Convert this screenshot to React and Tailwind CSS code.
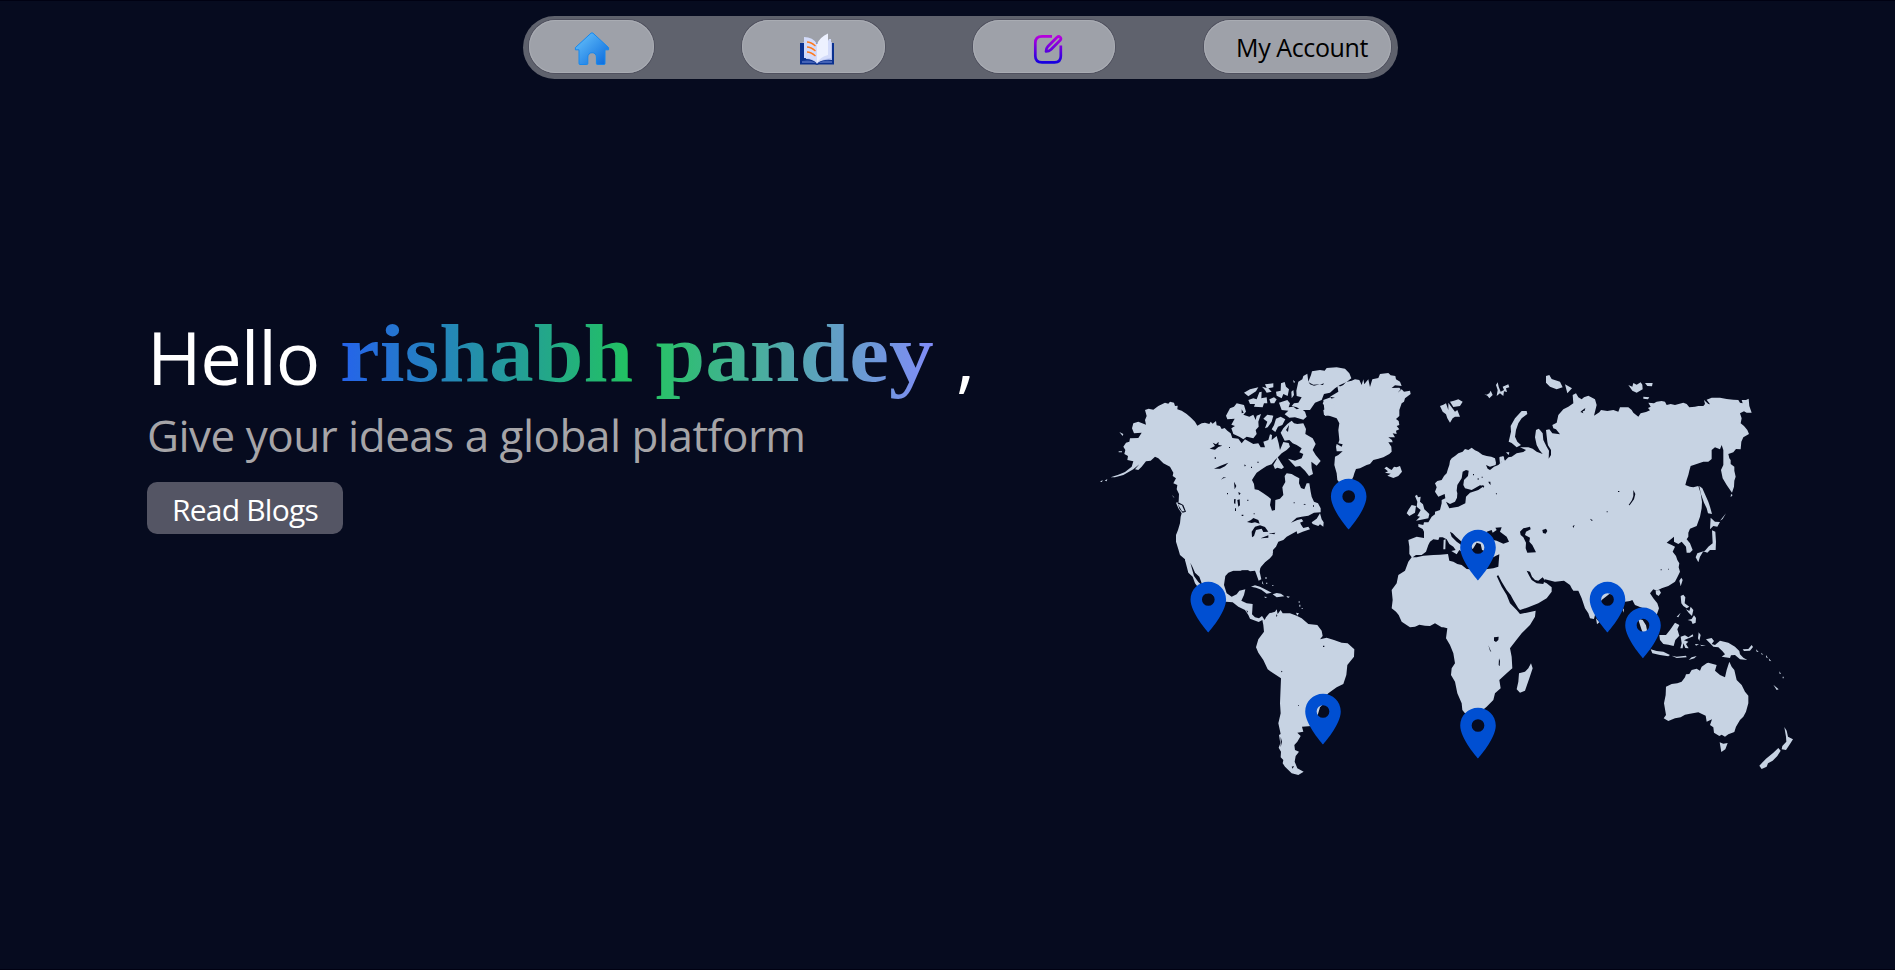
const LAND = "#c7d3e3";
const SEA = "#060b1f";

function Pin({ x, y }) {
  return (
    <path
      transform={`translate(${x} ${y + 0.5}) scale(2.54) translate(-12 -22)`}
      fill="#004fd2"
      fillRule="evenodd"
      d="M12 2C8.13 2 5 5.13 5 9c0 5.25 7 13 7 13s7-7.75 7-13c0-3.87-3.13-7-7-7zm0 9.5a2.5 2.5 0 0 1 0-5 2.5 2.5 0 0 1 0 5z"
    />
  );
}

/* Each region is drafted on its own local grid, three units to the pixel. */
function Region({ x, y, children }) {
  return <g transform={`translate(${x} ${y}) scale(0.33333)`}>{children}</g>;
}

function WorldMap() {
  return (
    <svg className="block h-[430px] w-[720px]" viewBox="1090 355 720 430" fill={LAND} strokeLinejoin="round">
      {/* Eurasia and Africa */}
      <Region x={1320} y={350}>
        <path d="M345 400L352 393 365 390 372 378 380 370 384 356 388 345 390 332 395 325 405 318 415 310 428 305 435 297 445 300 455 293 465 301 475 305 487 314 500 318 514 320 525 325 528 338 527 345 510 350 498 345 503 356 510 360 522 350 535 345 545 335 540 320 550 322 555 332 565 322 575 320 590 310 610 306 618 300 600 292 625 292 638 296 650 305 668 312 658 300 650 285 645 262 648 240 656 236 660 240 668 250 670 270 680 290 687 302 686 326 693 315 693 300 684 286 682 275 680 258 678 240 688 238 697 250 720 253 708 238 700 235 697 225 710 218 715 195 730 178 745 170 760 160 758 135 768 130 775 142 785 148 792 142 805 137 825 148 830 165 822 197 838 187 843 180 862 183 880 180 895 185 900 172 925 172 935 180 940 188 955 200 962 190 978 186 990 181 984 174 992 170 985 158 1002 160 1010 155 1025 153 1035 155 1040 165 1052 162 1065 165 1090 158 1100 162 1108 172 1125 170 1135 168 1150 168 1155 162 1152 150 1165 162 1170 163 1160 149 1175 143 1200 143 1220 147 1240 149 1255 150 1260 158 1268 160 1265 150 1278 150 1286 146 1288 168 1295 188 1280 188 1272 184 1260 190 1265 205 1262 220 1272 228 1282 240 1287 252 1270 262 1264 275 1262 298 1248 297 1240 307 1225 312 1228 325 1232 330 1232 342 1243 350 1243 362 1247 380 1243 392 1242 410 1236 428 1220 405 1208 385 1203 360 1210 345 1210 300 1205 285 1200 298 1185 292 1175 300 1175 327 1165 335 1150 335 1130 342 1112 348 1108 362 1105 375 1100 390 1096 405 1110 410 1120 412 1135 408 1142 430 1146 455 1145 475 1140 500 1130 528 1110 536 1105 548 1105 560 1100 568 1110 580 1118 600 1110 608 1100 608 1098 590 1085 575 1075 582 1062 575 1062 560 1050 570 1040 578 1055 585 1065 590 1058 605 1068 618 1072 630 1078 640 1076 652 1080 665 1072 682 1065 695 1045 708 1025 715 1010 722 1000 718 990 730 1000 745 1012 760 1017 775 1010 795 995 800 985 785 970 775 958 770 945 765 937 750 930 753 915 755 895 735 868 732 845 750 830 775 822 807 810 805 805 790 795 775 785 745 775 722 760 722 755 715 750 705 732 692 705 695 675 688 670 695 680 700 695 712 695 725 680 745 655 760 625 772 600 780 595 775 580 750 572 735 560 720 545 695 535 676 530 678 545 710 560 735 570 760 590 780 600 792 620 788 647 782 645 800 630 825 605 850 585 875 570 895 575 920 577 955 560 970 538 990 542 1015 525 1030 520 1050 500 1070 470 1095 450 1095 435 1090 427 1080 425 1060 412 1030 405 995 393 975 395 955 405 940 400 910 390 885 378 865 382 835 370 832 365 832 345 820 330 828 315 827 298 824 285 830 270 832 245 815 236 795 228 785 215 775 218 750 215 720 230 700 235 675 255 662 265 635 275 622 268 612 268 590 265 570 290 560 312 564 312 545 308 537 295 530 295 522 310 525 312 517 325 517 335 500 345 493 345 485 360 480 365 460 365 450 376 445 374 432 355 440 345 425 350 412Z" />
        <g fill={SEA}>
          <path d="M278 622L288 615 305 615 318 605 325 585 330 575 340 568 355 570 358 562 368 562 380 568 388 582 400 590 407 600 394 603 410 613 418 600 425 605 430 590 440 585 446 600 452 588 458 598 470 578 482 582 486 600 500 605 520 622 528 617 538 613 535 650 520 655 480 660 440 657 425 645 412 642 400 635 388 632 384 612 360 614 340 615 310 617 290 622Z" />
          <path d="M390 545L398 550 408 560 425 575 425 586 410 575 395 560Z" />
          <path d="M438 360L446 362 444 378 432 390 430 405 435 415 455 420 480 406 492 408 475 420 450 428 438 440 436 460 415 470 388 475 378 455 390 462 405 455 411 443 412 430 410 422 412 405 425 385 428 365Z" />
          <path d="M500 545L515 540 518 548 530 540 526 533 545 532 540 545 560 560 567 575 550 581 530 572 510 568Z" />
          <path d="M600 545L610 535 630 530 632 538 618 545 615 555 630 563 628 575 637 585 648 607 622 608 617 595 618 578 610 562 602 555Z" />
          <path d="M667 540L678 536 682 543 677 551 669 549ZM505 395L511 395 512 405 507 400ZM486 405L493 408 490 414ZM527 430L531 430 530 434ZM459 372H462V376H459ZM473 385H476V389H473ZM485 380H488V383H485ZM940 420L946 432 942 448 929 466 926 465 936 450 940 438ZM894 423H898V426H894ZM810 506L819 511 814 512ZM758 528L764 525 760 534ZM860 484H863V487H860ZM778 190L785 182 796 174 794 182 788 184 790 190 782 186Z" />
          <path d="M620 662L630 665 636 680 645 690 655 692 668 682 674 690 670 702 650 700 635 690 628 678ZM522 862L536 860 535 870 528 876 522 872ZM505 886L510 897 514 907 510 902ZM537 925L540 933 539 949 536 945Z" />
        </g>
        <path d="M371 570L377 568 376 598 370 598ZM633 940L638 955 628 985 615 1022 600 1028 590 1018 595 995 597 970 615 965 625 955ZM285 438L291 434 294 442 302 440 300 455 309 463 313 478 318 482 328 492 325 505 300 510 288 512 300 500 292 498 302 480 290 470 292 455ZM265 480L275 465 288 468 285 488 268 498 260 490Z" />
        {/* Greenland, Iceland and the polar islands */}
        <path d="M52 108L62 109 70 105 78 96 95 92 105 88 118 90 125 105 130 88 133 103 138 96 145 88 150 111 157 88 175 84 180 72 205 69 212 76 226 78 228 88 240 95 245 108 225 106 215 114 238 113 242 118 233 128 245 118 252 125 270 122 272 132 255 145 252 155 245 160 238 180 238 198 228 207 236 213 238 225 230 228 238 238 228 242 230 252 218 250 225 262 205 262 216 270 218 277 205 277 214 290 215 305 208 312 190 322 175 326 160 330 150 342 140 345 120 355 108 357 103 370 100 380 95 390 82 400 60 400 52 390 50 370 43 345 45 320 55 315 68 304 50 304 48 290 50 282 65 290 68 283 55 280 58 270 55 240 58 220 50 205 30 198 12 195 10 180 20 176 8 160 15 150 45 143 30 140 55 125Z" />
        <path d="M193 355L200 350 208 356 215 360 222 350 230 352 240 348 246 365 235 378 220 384 202 377 212 371 195 368 204 364ZM360 168L370 164 378 160 385 180 385 158 395 172 405 185 412 180 420 200 405 200 398 205 390 218 382 205 378 193 368 185ZM390 155L402 152 415 148 428 155 420 168 400 171ZM493 132L500 134 508 130 512 122 518 135 508 145 503 138ZM528 105L533 97 536 110 542 125 552 120 548 110 565 103 568 112 558 115 561 126 552 124 550 138 540 130 530 138 533 120ZM605 183L620 183 622 192 605 205 595 220 588 240 585 260 592 275 603 285 590 292 575 279 566 275 573 245 572 228 585 205ZM678 78L688 75 695 87 720 95 728 112 710 118 690 110 678 98ZM735 103L756 115 742 130ZM925 105L937 110 940 99 950 104 962 97 967 104 968 118 950 128 937 122ZM975 99L998 99 996 109 982 108ZM970 140L988 142 984 148 970 146ZM538 322L550 318 553 325 540 342ZM558 307L568 307 566 315Z" />
        {/* Japan and Sakhalin */}
        <path d="M1138 408L1147 415 1156 435 1165 455 1170 470 1176 492 1164 490 1160 475 1152 458 1142 430ZM1172 503L1185 515 1200 516 1192 530 1180 528 1170 538ZM1176 541L1186 545 1188 575 1187 600 1170 600 1162 608 1150 604 1140 620 1135 637 1127 622 1132 610 1155 602 1165 590 1178 580 1177 560ZM1200 512L1218 490 1208 507ZM1233 432L1238 435 1232 442Z" />
      </Region>

      {/* North America */}
      <Region x={1090} y={350}>
        <path d="M165 180L176 176 190 179 205 168 225 158 235 161 240 155 252 158 255 168 263 167 262 178 275 182 290 192 303 203 315 215 322 227 335 220 345 218 358 222 362 215 368 221 378 213 380 226 390 228 395 237 404 234 412 242 422 250 427 264 445 266 455 280 465 268 478 275 490 282 505 280 512 292 525 292 520 275 535 270 540 253 546 255 545 270 560 258 566 280 570 300 580 276 596 279 600 290 590 300 575 310 565 320 555 330 545 343 530 348 515 358 500 368 492 380 486 390 492 402 494 418 505 420 520 430 535 440 543 447 540 465 546 482 555 480 556 450 570 446 580 435 577 412 586 396 584 378 590 370 605 372 615 378 628 385 627 400 633 414 643 418 650 400 658 400 662 425 665 440 672 455 684 460 692 475 692 487 672 488 655 497 635 500 620 503 603 518 622 510 638 506 650 513 632 522 640 534 655 530 660 538 638 545 622 552 620 544 605 552 590 560 580 570 565 575 558 590 549 600 548 615 540 625 525 637 505 660 298 662 290 640 285 628 270 615 265 598 258 575 258 555 264 540 270 520 272 500 275 490 265 475 258 458 266 455 267 432 260 418 262 405 250 400 258 385 248 378 250 368 240 350 220 340 205 325 195 320 182 332 168 334 155 350 145 360 135 358 148 343 130 358 100 375 75 382 62 382 85 374 105 366 125 350 130 334 112 330 114 318 103 312 106 300 100 290 108 278 118 275 120 265 145 264 155 248 132 250 126 235 130 220 145 215 168 224 165 210 170 198Z" />
        <path d="M408 197L420 175 432 170 440 160 462 165 468 185 460 194 478 200 490 194 497 210 500 197 513 192 505 215 506 230 497 240 500 252 490 265 470 260 460 268 448 260 430 252 424 235 435 228 424 224 434 206 412 208ZM462 128L480 118 505 112 498 124 475 139ZM475 150L490 145 500 148 508 127 515 125 514 145 530 142 532 160 522 160 518 172 492 170 495 162 480 162ZM516 110L530 114 525 103 550 100 550 112 535 115 545 125 530 128 525 120ZM558 125L572 122 573 100 584 96 588 110 597 118 593 138 580 132 575 145 560 137ZM538 148L552 142 560 148 553 160 542 160ZM567 158L592 150 600 160 596 172 610 170 620 178 632 175 645 185 650 200 640 209 615 202 598 203 584 193 595 182 575 180ZM604 125L610 120 612 135 605 145ZM609 90L615 95 612 100ZM619 122L625 95 637 88 640 78 652 71 655 95 663 75 666 64 690 60 704 62 710 54 740 52 765 56 778 70 784 85 770 96 750 105 735 115 720 128 702 132 695 150 675 158 660 180 635 180 620 172 605 168 612 160 625 158 635 142 620 138ZM572 248L580 235 592 222 605 212 612 220 622 222 640 220 648 237 646 252 668 265 677 282 668 300 677 315 692 333 680 347 664 335 665 355 669 372 657 378 645 362 630 348 616 350 605 338 594 326 615 332 635 325 640 312 628 307 635 295 620 285 608 280 598 270 584 272ZM550 345L560 328 562 320 572 337 582 352 575 357 562 353 555 357ZM520 206L532 194 550 197 545 215 533 232 525 235 532 215ZM552 226L558 206 572 200 586 208 577 225 564 230 556 246 545 238ZM665 517L680 506 690 490 695 508 701 517 700 530 690 523 685 528 668 522ZM700 150L722 142 735 170 726 192 705 198ZM88 246L100 252 98 258ZM86 304H96V307H86ZM30 395L38 390 36 396ZM44 392L52 387 50 394ZM247 435L254 445 249 440Z" />
        <g fill={SEA}>
          <path d="M359 296L375 288 368 278 378 283 386 275 385 284 397 287 385 291 375 299ZM372 356L390 348 415 338 405 349 390 356ZM393 389L400 382 409 383 400 385ZM442 450L449 448 450 466 445 470ZM432 448L437 447 436 462 432 460ZM432 395L439 408 434 418ZM471 516L483 510 490 504 505 510 509 521 495 517 485 519ZM486 562L485 545 495 530 510 526 525 531 535 545 520 546 515 536 498 540 492 558ZM512 565L535 556 535 563ZM536 550L556 548 553 553ZM632 503L655 505 672 494 665 512 658 527 640 532 630 518 640 514ZM464 343L468 348 463 349ZM374 322H378V326H374ZM417 291H420V294H417ZM445 426L452 430 447 436ZM483 350H486V354H483ZM502 335H506V338H502ZM435 475H438V483H435ZM455 494H460V498H455ZM491 490H494V493H491ZM611 457H614V460H611ZM642 461L649 465 641 464ZM669 466H672V470H669ZM411 429H414V433H411ZM472 449H475V453H472ZM262 455L280 465 288 485 278 488 268 476Z" />
          <path d="M588 240L597 225 594 246ZM656 97L670 104 690 103 672 107 660 103ZM455 178L461 188 455 190ZM690 104L702 100 699 105Z" />
        </g>
        <path d="M263 461L276 466 284 484 276 484Z" />
      </Region>

      {/* Central and South America */}
      <Region x={1180} y={560}>
        <path d="M15 0L20 -25 280 -25 260 0 242 18 239 35 244 58 236 62 228 40 225 32 210 34 195 25 182 32 160 32 145 38 136 48 132 75 140 100 155 110 170 103 178 92 196 88 192 105 184 122 200 130 218 132 217 150 216 163 225 172 237 175 246 168 254 180 258 172 268 160 285 155 290 148 293 162 302 150 308 160 330 160 350 167 365 175 385 192 412 195 425 212 428 228 420 238 440 233 462 240 485 248 503 250 523 268 522 290 502 315 499 345 490 372 470 382 445 400 430 415 430 432 420 442 414 462 395 498 366 500 370 515 352 518 362 528 352 545 343 555 345 570 357 575 347 588 344 605 352 625 371 635 355 645 335 640 315 620 308 610 310 600 302 592 303 575 296 563 301 550 297 525 302 522 295 490 302 460 300 430 303 355 280 340 263 328 250 300 235 278 228 262 235 238 252 215 250 195 247 180 236 186 220 180 210 176 205 165 195 150 175 140 158 127 138 125 115 120 93 99 78 100 60 90 45 70 38 50 25 38Z" />
        <path d="M213 80L225 76 240 80 255 88 275 98 260 101 244 89 228 83ZM278 103L290 99 303 101 313 109 290 112ZM252 110L262 111 256 114ZM319 108L330 110 324 114ZM246 62L251 74 246 70ZM256 52H260V56H256ZM356 124H359V128H356ZM358 134H361V140H358ZM258 68H262V71H258ZM277 75H280V78H277ZM365 144H368V147H365ZM348 158L357 160 352 167Z" />
        <path fill={SEA} d="M31 8L38 22 45 38 58 50 68 78 55 66 42 48ZM288 163L292 166 290 172ZM429 257H433V261H429ZM303 332L308 335 304 337ZM355 435H357V438H355ZM302 530L306 545 302 562ZM200 150L204 155 201 158ZM335 620L342 618 338 626Z" />
      </Region>

      {/* South-east Asia and Oceania */}
      <Region x={1560} y={540}>
        <path d="M287 152L298 150 303 158 296 168 288 163ZM358 122L364 113 368 120 362 139ZM362 168L370 164 376 172 374 190 388 200 380 205 370 198 364 190ZM378 208L388 213 392 200 400 210 396 228 386 218ZM350 230L362 218 355 232ZM383 240L395 237 402 226 408 234 407 248 398 252 394 243ZM298 285L318 285 330 270 345 248 358 255 352 268 358 287 346 300 341 318 325 314 310 312 300 300ZM362 290L375 286 385 292 398 283 400 289 380 297 372 301 385 305 378 312 386 325 376 324 370 310 368 325 361 325 365 310ZM272 328L290 333 310 335 330 345 325 349 300 345 277 340ZM335 347L350 350 378 347 380 352 350 354ZM386 360L395 352 410 348 403 355ZM416 277L422 285 418 303 414 295ZM405 312L417 313 408 317ZM420 314L438 317 425 318ZM438 298L455 294 462 303 455 312 465 315 480 302 505 308 525 320 538 333 540 343 550 353 562 360 540 358 525 345 513 346 510 354 485 350 495 343 487 333 475 322 460 320 450 310ZM548 328L565 327 575 315 579 321 570 332 552 333ZM588 328L596 336 590 335ZM604 338L610 344 604 343ZM618 345L624 355 618 352ZM626 355L634 364 628 362ZM640 434L656 448 650 450ZM658 394L663 401 659 402ZM668 410H671V415H668ZM234 236L248 240 258 256 262 275 270 300 275 320 262 305 245 270ZM108 235L118 247 111 253ZM188 210L192 205 191 218Z" />
        <path d="M318 440L335 432 352 430 365 425 375 412 378 403 388 402 395 390 410 386 420 392 425 380 440 370 445 368 470 375 465 392 480 405 495 412 500 390 508 365 515 380 523 390 530 420 545 435 555 455 565 467 565 490 558 515 550 530 540 540 528 560 523 576 505 583 495 590 485 584 478 588 462 578 460 562 450 555 456 538 440 545 437 527 415 517 390 521 375 524 362 532 345 535 325 543 311 535 318 525 312 490 317 465ZM479 607L490 611 503 609 496 628 484 636ZM673 561L680 572 684 590 699 598 690 612 678 630 665 628 667 618 679 605 678 590ZM655 624L662 632 652 648 638 662 624 670 620 680 605 687 598 677 618 656 640 638Z" />
        <path fill={SEA} d="M302 88H305V91H302ZM324 86H326V89H324Z" />
      </Region>

      <Pin x={1348.7} y={529} />
      <Pin x={1478} y={580} />
      <Pin x={1208.3} y={632} />
      <Pin x={1323} y={744} />
      <Pin x={1478} y={758} />
      <Pin x={1607.5} y={632} />
      <Pin x={1643} y={657.7} />
    </svg>
  );
}

function HomeIcon() {
  return (
    <svg className="h-[34px] w-[36px]" viewBox="0 0 36 34">
      <defs>
        <linearGradient id="home" x1="0" y1="0" x2="1" y2="1">
          <stop offset="0.15" stopColor="#5cb8f8" />
          <stop offset="1" stopColor="#0868dc" />
        </linearGradient>
      </defs>
      <path
        d="M17 1.2a1.6 1.6 0 0 1 2 0L34.6 15.6v2.2H31V31.5a1 1 0 0 1-1 1h-6.6a1 1 0 0 1-1-1V25a4.3 4.3 0 0 0-8.6 0v6.500a1 1 0 0 1-1 1H6a1 1 0 0 1-1-1V17.800H1.400V15.600Z"
        fill="url(#home)"
        stroke="#1688ee"
        strokeWidth="1"
        strokeLinejoin="round"
      />
    </svg>
  );
}

function BookIcon() {
  return (
    <svg className="h-8 w-[34px]" viewBox="0 0 34 32">
      <path fill="#0b318f" d="M0 10H34V31.500H19L17 32 15 31.500H0Z" />
      <path fill="#4362b6" d="M2 28Q12 26 17 31Q23 26 32 28V30H2Z" />
      <path fill="#b9c4f0" d="M2 9H6V26Q13 26 17 30.500Q22 26 32 27V9H28L17 15Z" />
      <path fill="#d3dbfa" d="M4 4Q13 4 17 11V30Q13 25 4 25ZM29 6H31V25Q22 26 17 30Z" />
      <path fill="#edf1ff" d="M17 11Q20 4 28 .500V22Q20 24 17 30Z" />
      <path d="M7 9Q11 9 15.500 13M7 14Q11 14 15.500 18M7 19Q11 19 15.500 23" fill="none" stroke="#ff7a1c" strokeWidth="1.300" />
    </svg>
  );
}

function ComposeIcon() {
  return (
    <svg className="h-[30px] w-[30px]" viewBox="0 0 30 30" fill="none" stroke="url(#compose)" strokeLinejoin="round">
      <defs>
        <linearGradient id="compose" gradientUnits="userSpaceOnUse" x1="0" y1="2" x2="0" y2="29">
          <stop stopColor="#b800dd" />
          <stop offset="1" stopColor="#1400e0" />
        </linearGradient>
      </defs>
      <path strokeWidth="2.700" d="M19 2.300H9Q2.300 2.300 2.300 9V22Q2.300 28.300 9 28.300H21.500Q27.800 28.300 27.800 22V11.500" />
      <path strokeWidth="2.700" d="M13 17.500Q13.200 14 15 12.200L24 3.200Q25.700 1.800 27.200 3.200Q28.600 4.800 27.200 6.300L18 15.500Q16 17.300 13 17.500Z" />
    </svg>
  );
}

const pill =
  "flex h-[53px] items-center justify-center rounded-[27px] bg-[#9ea1a9] shadow-[0_0_0_1px_#50515f,inset_0_0_0_1px_#a9acb3]";

export default function App() {
  return (
    <div className="flex h-[970px] w-[1895px] flex-col overflow-hidden border-y border-[#000112] bg-[#060b1f] font-['Open_Sans','Noto_Sans',sans-serif]">
      <nav className="mt-[15px] ml-[523px] flex h-[63px] w-[875px] shrink-0 items-start rounded-[32px] bg-[#5f626d] pt-1 pl-[6px]">
        <button className={`${pill} w-[125px]`}>
          <span className="mt-1"><HomeIcon /></span>
        </button>
        <button className={`${pill} ml-[88px] w-[143px]`}>
          <span className="mt-1 ml-[7px]"><BookIcon /></span>
        </button>
        <button className={`${pill} ml-[88px] w-[142px]`}>
          <span className="mt-1 ml-2"><ComposeIcon /></span>
        </button>
        <button className={`${pill} ml-[89px] w-[187px] pt-[3px] pl-[9px] text-[25px] tracking-[-0.4px] text-black`}>My Account</button>
      </nav>
      <main className="flex">
        <section className="mt-[233px] ml-[147px] flex w-[943px] flex-col items-start">
          <h1 className="flex h-[90px] items-baseline whitespace-pre text-[74px] leading-[90px] text-white">
            <span className="w-[193px] tracking-[-1.200px]">Hello</span>
            <span className="relative -top-1 w-[597px]">
              <span className="inline-block origin-left scale-x-[1.09] bg-linear-to-r/srgb from-[#2563eb] via-[#22c55e] to-[#818cf8] bg-clip-text font-['Liberation_Serif',serif] text-[82px] font-bold text-transparent">rishabh pandey</span>
            </span>
            <span className="ml-[19px]">,</span>
          </h1>
          <p className="mt-[3px] h-[60px] whitespace-nowrap text-[44px] leading-[60px] tracking-[-0.500px] text-[#a6a5a8]">Give your ideas a global platform</p>
          <button className="mt-[17px] h-[52px] w-[196px] rounded-[10px] bg-[#545564] pt-[3px] text-[30px] tracking-[-0.800px] text-white">Read Blogs</button>
        </section>
        <section className="mt-[276px]">
          <WorldMap />
        </section>
      </main>
    </div>
  );
}
